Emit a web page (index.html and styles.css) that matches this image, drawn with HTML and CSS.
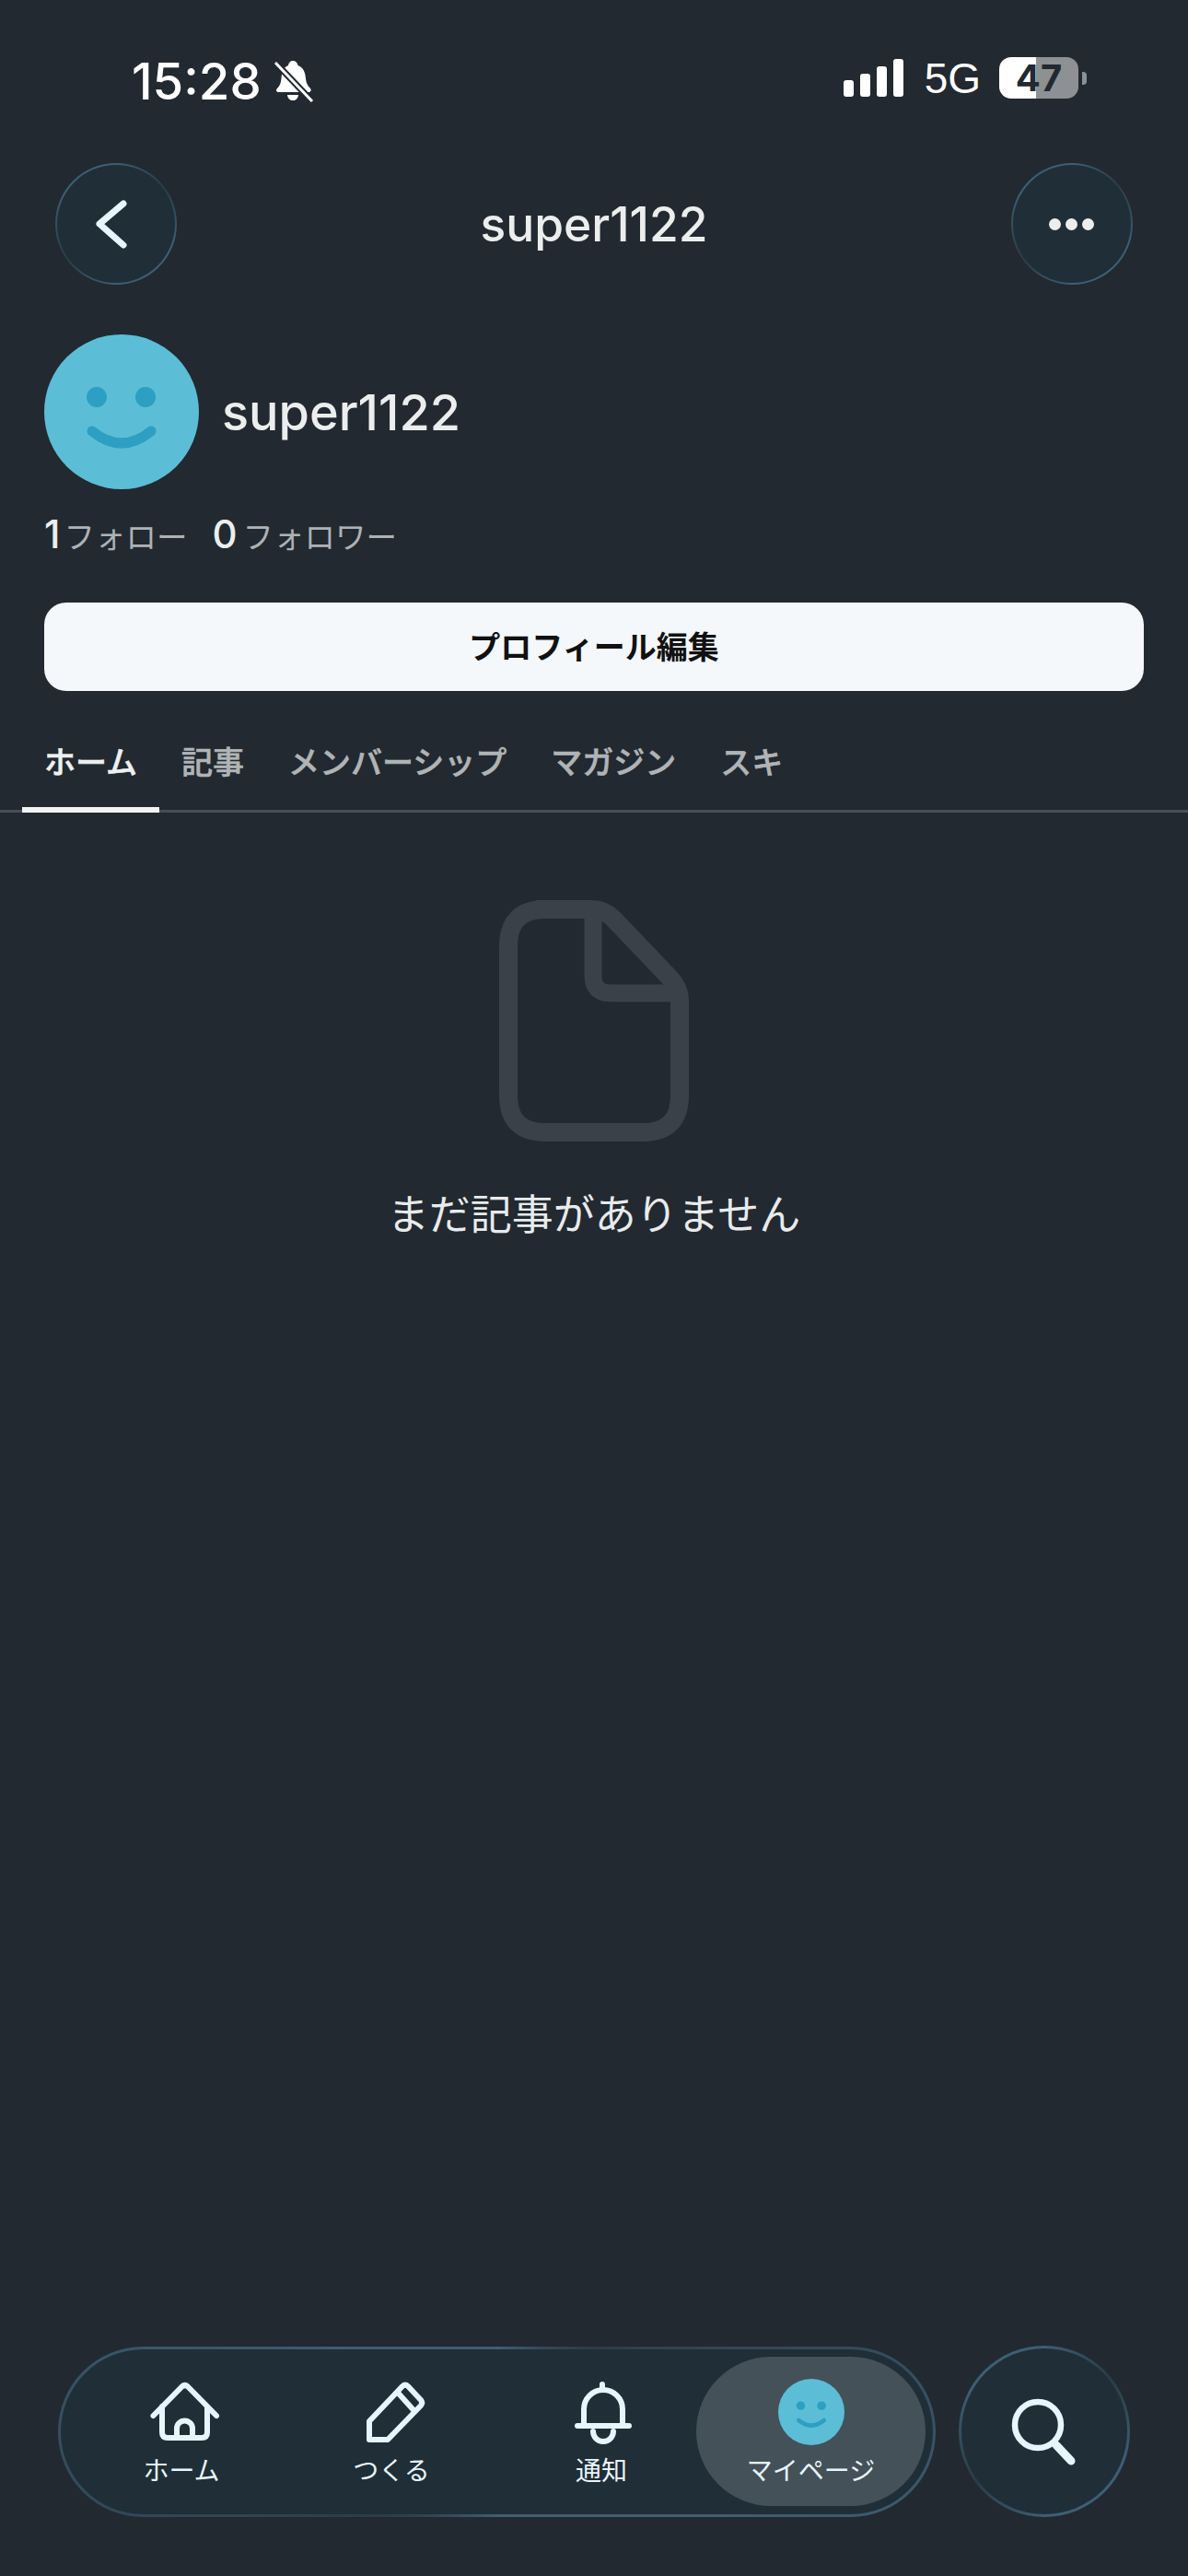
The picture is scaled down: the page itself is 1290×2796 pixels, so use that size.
FILE: index.html
```html
<!DOCTYPE html>
<html lang="ja">
<head>
<meta charset="utf-8">
<title>super1122</title>
<link rel="stylesheet" href="styles.css">
</head>
<body>
<div class="page">
  <div class="status">
    <div class="status-left">
      <span class="time">15:28</span>
      <svg class="mute" viewBox="0 0 44 46" width="44" height="46">
        <path d="M21 1c3 0 5 2 5.500 5 6 2 8 8 8.500 14 .3 5 2 8 5 11 1.500 2 .5 4-2 4H6c-3 0-4-2-2-4 3-3 4-6 4.500-11C9 13 11 8 16 6c.5-3 2-5 5-5z" fill="#fff"/>
        <path d="M15 38h12c-.5 4-3 6-6 6s-5.500-2-6-6z" fill="#fff"/>
        <path d="M2 3 42 45" stroke="#222930" stroke-width="7"/>
        <path d="M2 3 42 45" stroke="#fff" stroke-width="3"/>
      </svg>
    </div>
    <div class="status-right">
      <div class="signal"><i class="b1"></i><i class="b2"></i><i class="b3"></i><i class="b4"></i></div>
      <span class="net">5G</span>
      <div class="battery">47</div>
    </div>
  </div>

  <header class="topbar">
    <button class="round" type="button">
      <svg viewBox="0 0 60 60" width="60" height="60"><path d="M38 8 12 30l26 23" class="chev"/></svg>
    </button>
    <h1 class="title">super1122</h1>
    <button class="round" type="button">
      <span class="dots"><i></i><i></i><i></i></span>
    </button>
  </header>

  <section class="profile">
    <div class="identity">
      <svg class="avatar" viewBox="0 0 168 168" width="168" height="168">
        <circle cx="84" cy="84" r="84" fill="#5bbed6"/>
        <circle cx="57" cy="68" r="11" fill="#2d9fc2"/>
        <circle cx="110" cy="68" r="11" fill="#2d9fc2"/>
        <path d="M52 105q32 26 64 0" fill="none" stroke="#2d9fc2" stroke-width="11" stroke-linecap="round"/>
      </svg>
      <span class="name">super1122</span>
    </div>
    <div class="stats">
      <b class="num">1</b><span class="lab first">フォロー</span>
      <b class="num second">0</b><span class="lab">フォロワー</span>
    </div>
    <button class="edit" type="button">プロフィール編集</button>
  </section>

  <nav class="tabs">
    <a class="tab active">ホーム</a>
    <a class="tab">記事</a>
    <a class="tab">メンバーシップ</a>
    <a class="tab">マガジン</a>
    <a class="tab">スキ</a>
  </nav>

  <main class="empty">
    <svg class="doc" viewBox="0 0 206 262" width="206" height="262">
      <path d="M40 10H100q14 0 24 10l62 65q10 11 10 24V212q0 40-40 40H50q-40 0-40-40V50q0-40 40-40z" fill="none" stroke="#3a4149" stroke-width="20"/>
      <path d="M102 12V82q0 19 19 19H194" fill="none" stroke="#3a4149" stroke-width="19"/>
    </svg>
    <p class="empty-text">まだ記事がありません</p>
  </main>

  <div class="dock">
    <div class="bar">
      <a class="item">
        <svg viewBox="0 0 100 72" width="100" height="72">
          <path class="ico" d="M19.500 40 50.500 8.500q3.200-3 6.500 0L88 40M29 30V58q0 6 6 6H72q6 0 6-6V30M45 64V54a8.500 8.500 0 0 1 17 0V64"/>
        </svg>
        <span>ホーム</span>
      </a>
      <a class="item">
        <svg viewBox="0 0 100 72" width="100" height="72">
          <path class="ico" d="M26 46 62 8q3-3 6 0l14 15q2.500 3 0 6L46 66H26ZM57 15 75 35"/>
        </svg>
        <span>つくる</span>
      </a>
      <a class="item">
        <svg viewBox="0 0 108 72" width="108" height="72">
          <path class="ico" d="M55 6V11M35 51V33a21 21 0 0 1 42 0V51M28 51H84M45 57a11 11 0 0 0 22 0"/>
        </svg>
        <span>通知</span>
      </a>
      <a class="item current">
        <svg viewBox="0 0 168 168" width="72" height="72">
          <circle cx="84" cy="84" r="84" fill="#5bbed6"/>
          <circle cx="57" cy="68" r="11" fill="#2d9fc2"/>
          <circle cx="110" cy="68" r="11" fill="#2d9fc2"/>
          <path d="M52 105q32 26 64 0" fill="none" stroke="#2d9fc2" stroke-width="11" stroke-linecap="round"/>
        </svg>
        <span>マイページ</span>
      </a>
    </div>
    <button class="search" type="button">
      <svg viewBox="0 0 80 80" width="80" height="80">
        <circle cx="33" cy="33" r="25" fill="none" stroke="#e8f5fd" stroke-width="6.500"/>
        <path d="M53 55 69 72" fill="none" stroke="#e8f5fd" stroke-width="9" stroke-linecap="round"/>
      </svg>
    </button>
  </div>
</div>
</body>
</html>
```
FILE: styles.css
```css
* { box-sizing: border-box; }
html, body { margin: 0; padding: 0; background: #222930; }
body { font-family: Inter, "Noto Sans CJK JP", "Noto Sans", sans-serif; color: #eceeee; }
button { font-family: inherit; cursor: pointer; }
h1, p { margin: 0; }

.page { width: 1290px; height: 2796px; display: flex; flex-direction: column; overflow: hidden; }

/* glass-edged surfaces: the rim fades at two opposite corners */
.round, .bar, .search {
  border-style: solid;
  border-color: transparent;
  background:
    linear-gradient(#202e37, #202e37) padding-box,
    conic-gradient(#3d5f75 0deg, #2a3c47 50deg, #3d5f75 110deg, #3d5f75 180deg, #2a3c47 235deg, #3d5f75 300deg, #3d5f75 360deg) border-box;
}

/* status bar */
.status { height: 177px; padding: 62px 119px 0 143px; display: flex; justify-content: space-between; align-items: flex-start; color: #fff; }
.status-left { display: flex; align-items: center; gap: 13px; }
.time { font-size: 54.500px; line-height: 52px; font-weight: 500; }
.mute { display: block; }
.status-right { display: flex; align-items: center; gap: 20px; }
.signal { display: flex; align-items: flex-end; gap: 7px; height: 41px; }
.signal i { display: block; width: 11px; background: #fff; border-radius: 3px; }
.signal .b1 { height: 18px; }
.signal .b2 { height: 25px; }
.signal .b3 { height: 33px; }
.signal .b4 { height: 41px; }
.net { font-family: "Liberation Sans", sans-serif; font-size: 46px; line-height: 44px; font-weight: 400; margin-left: 3px; }
.battery { position: relative; width: 86px; height: 45px; border-radius: 13px; background: linear-gradient(90deg, #fff 0 40px, #8d9194 40px); color: #222930; font-size: 40px; font-weight: 700; line-height: 45px; text-align: center; }
.battery::after { content: ""; position: absolute; right: -9px; top: 16px; width: 5px; height: 14px; border-radius: 0 4px 4px 0; background: #8d9194; }

/* top bar */
.topbar { height: 132px; padding: 0 60px; display: flex; align-items: center; justify-content: space-between; }
.round { width: 132px; height: 132px; border-radius: 50%; border-width: 2px; display: flex; align-items: center; justify-content: center; padding: 0; }
.chev { fill: none; stroke: #e8f5fd; stroke-width: 7; stroke-linecap: round; stroke-linejoin: round; }
.title { font-size: 51.500px; font-weight: 500; color: #eceeee; }
.dots { display: flex; gap: 5px; }
.dots i { width: 13px; height: 13px; border-radius: 50%; background: #eceeee; }

/* profile */
.profile { padding: 54px 48px 0; }
.identity { display: flex; align-items: center; gap: 25px; }
.avatar { display: block; flex: none; }
.name { font-size: 54px; font-weight: 500; color: #eceeee; }
.stats { display: flex; align-items: baseline; height: 50px; margin-top: 24px; line-height: 50px; }
.num { font-size: 42px; font-weight: 500; color: #eceeee; }
.lab { font-size: 33.500px; color: #aeb2b5; margin-left: 4px; }
.second { margin-left: 27px; margin-right: 2px; }
.edit { display: block; width: 100%; height: 96px; margin-top: 49px; padding: 0 0 4px; border: 0; border-radius: 24px; background: #f4f8fb; color: #111; font-size: 34px; font-weight: 700; }

/* tabs */
.tabs { display: flex; height: 132px; padding: 0 24px; border-bottom: 3px solid #474e55; align-items: flex-end; }
.tab { position: relative; padding: 0 24px 26px; font-size: 34px; line-height: 50px; font-weight: 500; color: #b0b4b6; -webkit-text-stroke: 0.6px currentColor; }
.tab.active { color: #eef0f0; }
.tab.active::after { content: ""; position: absolute; left: 0; right: 0; bottom: -3px; height: 6px; background: #f2f3f3; }

/* empty state */
.empty { flex: 1; display: flex; flex-direction: column; align-items: center; padding-top: 95px; }
.doc { display: block; }
.empty-text { margin-top: 48px; font-size: 45px; line-height: 64px; font-weight: 400; color: #e8ebec; }

/* bottom dock */
.dock { display: flex; gap: 25px; padding: 0 63px 64px; align-items: center; }
.bar { width: 953px; height: 185px; border-radius: 93px; border-width: 3px; display: flex; align-items: center; padding-left: 17px; }
.item { width: 228px; height: 162px; display: flex; flex-direction: column; align-items: center; padding-top: 24px; color: #e8f5fd; font-size: 28px; line-height: 40px; }
.item svg { display: block; flex: none; margin-bottom: 8px; }
.ico { fill: none; stroke: #e8f5fd; stroke-width: 6; stroke-linecap: round; stroke-linejoin: round; }
.item.current { width: 249px; margin-left: -11px; border-radius: 81px; background: #445159; }
.search { width: 186px; height: 186px; border-radius: 50%; border-width: 3px; padding: 0; display: flex; align-items: center; justify-content: center; }
```
